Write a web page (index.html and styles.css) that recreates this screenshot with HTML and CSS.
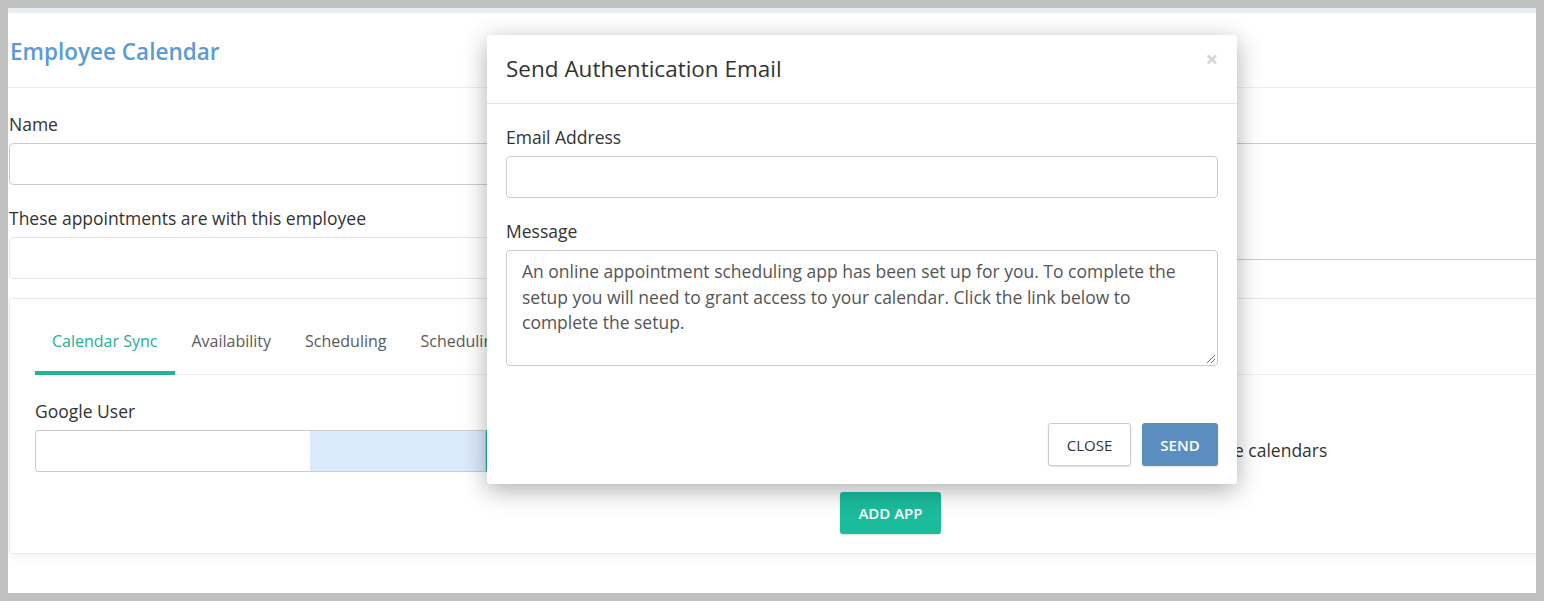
FILE: index.html
```html
<!DOCTYPE html>
<html>
<head>
<meta charset="utf-8">
<link rel="stylesheet" href="styles.css">
</head>
<body>
<div class="frame">
  <div class="topstrip"></div>
  <div class="page-header">
    <h1 class="page-title">Employee Calendar</h1>
  </div>
  <div class="top-grid">
    <div class="left-fields">
      <label class="lbl">Name</label>
      <div class="input"></div>
      <label class="lbl lbl-gap">These appointments are with this employee</label>
      <div class="input input-light"></div>
    </div>
    <div class="right-fields">
      <div class="right-box"></div>
    </div>
  </div>

  <div class="panel">
    <ul class="tabs">
      <li class="tab active">Calendar Sync</li>
      <li class="tab">Availability</li>
      <li class="tab">Scheduling</li>
      <li class="tab">Scheduling Links</li>
      <li class="tab">Notifications</li>
    </ul>
    <div class="tab-body">
      <div class="col-left">
        <label class="lbl">Google User</label>
        <div class="input-group">
          <div class="input g-input"></div>
          <div class="g-btn">Authorize</div>
        </div>
      </div>
      <div class="col-right">
        <div class="check-row"><span class="chk"></span><span class="chk-text">Block off time for events that are in any of the calendars</span></div>
        <button class="btn btn-teal">Add App</button>
      </div>
    </div>
  </div>
</div>

<div class="modal">
  <div class="modal-header">
    <h2 class="modal-title">Send Authentication Email</h2>
    <span class="modal-close">&times;</span>
  </div>
  <div class="modal-body">
    <label class="lbl">Email Address</label>
    <div class="input"></div>
    <label class="lbl lbl-gap">Message</label>
    <div class="textarea">An online appointment scheduling app has been set up for you. To complete the setup you will need to grant access to your calendar. Click the link below to complete the setup.<span class="grip"></span></div>
  </div>
  <div class="modal-footer">
    <button class="btn btn-default">Close</button>
    <button class="btn btn-blue">Send</button>
  </div>
</div>
</body>
</html>
```
FILE: styles.css
```css
* { box-sizing: border-box; }
html, body { margin: 0; padding: 0; }
body {
  background: #c0c0c0;
  font-family: "Open Sans", "Noto Sans", sans-serif;
  color: #333;
  font-size: 16px;
  width: 1544px;
  height: 601px;
  overflow: hidden;
  position: relative;
}
.frame {
  position: relative;
  margin: 8px;
  width: 1528px;
  height: 585px;
  background: #fff;
  overflow: hidden;
  padding-left: 1px;
}
.topstrip {
  height: 5px;
  background: #e8eef3;
  margin-left: -1px;
}
.page-header {
  height: 75px;
  padding-top: 24px;
  border-bottom: 1px solid #eee;
  margin-left: -1px;
}
.page-title {
  margin: 0;
  padding-left: 2px;
  font-size: 22.5px;
  line-height: 30px;
  font-weight: 600;
  color: #5b9bd5;
}
.lbl {
  display: block;
  font-size: 17.5px;
  line-height: 22px;
  margin-bottom: 8px;
  color: #333;
}
.lbl-gap { margin-top: 22px; }
.input {
  height: 42px;
  border: 1px solid #ccc;
  border-radius: 4px;
  background: #fff;
}
.input-light { border-color: #e6e6e6; }
.top-grid {
  display: grid;
  grid-template-columns: 800px 1fr;
  gap: 20px;
  padding-top: 25px;
}
.left-fields .input { margin-right: -2px; }
.right-fields { padding-top: 30px; margin-right: -20px; }
.right-box {
  height: 117px;
  border: 1px solid #ccc;
  border-radius: 4px;
}
.panel {
  margin-top: 19px;
  width: 1560px;
  height: 256px;
  border: 1px solid #e8e8e8;
  border-radius: 3px;
  box-shadow: 0 3px 8px rgba(0, 0, 0, 0.05);
  padding: 18px 25px 0;
}
.tabs {
  display: flex;
  list-style: none;
  margin: 0;
  padding: 0;
  border-bottom: 1px solid #eee;
}
.tab {
  padding: 13px 17px 19px;
  line-height: 22px;
  font-size: 16px;
  color: #5a5a5a;
  border-bottom: 4px solid transparent;
  margin-bottom: -1px;
  white-space: nowrap;
}
.tab.active {
  color: #1fae96;
  border-bottom-color: #1fb398;
  padding-right: 18px;
}
.tab.active + .tab { padding-left: 16px; }
.tab-body {
  display: grid;
  grid-template-columns: 775px 1fr;
  gap: 30px;
  padding-top: 25px;
}
.input-group { display: flex; }
.g-input {
  width: 451px;
  flex: none;
  border-radius: 3px 0 0 3px;
  background: linear-gradient(to right, #fff 0, #fff 274px, #dbeafc 274px);
}
.g-btn {
  flex: 1;
  background: #1abc9c;
  color: #fff;
  height: 42px;
  line-height: 42px;
  padding-left: 16px;
  font-weight: 600;
  font-size: 15px;
}
.col-right { padding-top: 39px; }
.check-row {
  display: flex;
  align-items: center;
  height: 22px;
  gap: 18px;
  line-height: 22px;
  font-size: 17.5px;
  color: #333;
  white-space: nowrap;
}
.chk {
  width: 13px;
  height: 13px;
  border: 1px solid #999;
  border-radius: 2px;
}
.btn {
  font-family: "Open Sans", "Noto Sans", sans-serif;
  text-transform: uppercase;
  font-size: 15px;
  font-weight: 600;
  border-radius: 3px;
  cursor: pointer;
  padding: 0;
}
.btn-teal {
  margin-top: 31px;
  height: 42px;
  width: 101px;
  background: #1abc9c;
  color: #fff;
  border: none;
  box-shadow: 0 1px 2px rgba(0, 0, 0, 0.15);
}
.modal {
  position: absolute;
  left: 487px;
  top: 35px;
  width: 750px;
  height: 449px;
  background: #fff;
  border-radius: 3px;
  box-shadow: 0 6px 24px rgba(0, 0, 0, 0.32);
}
.modal-header {
  display: flex;
  justify-content: space-between;
  align-items: flex-start;
  padding: 18px 19px 19px 19px;
  border-bottom: 1px solid #e5e5e5;
}
.modal-title {
  margin: 0;
  font-size: 22.5px;
  line-height: 31px;
  font-weight: 400;
  color: #333;
}
.modal-close {
  font-size: 22px;
  line-height: 1;
  font-weight: 700;
  color: #d4d4d4;
  margin-top: -6px;
}
.modal-body {
  padding: 22px 19px 57px;
}
.textarea {
  position: relative;
  height: 116px;
  border: 1px solid #ccc;
  border-radius: 4px;
  padding: 8px 16px 8px 15px;
  font-size: 17.5px;
  line-height: 25.5px;
  color: #555;
}
.grip {
  position: absolute;
  right: 2px;
  bottom: 2px;
  width: 8px;
  height: 8px;
  background: linear-gradient(135deg, transparent 45%, #777 45%, #777 55%, transparent 55%, transparent 70%, #777 70%, #777 80%, transparent 80%);
}
.modal-footer {
  display: flex;
  justify-content: flex-end;
  gap: 11px;
  padding: 0 19px 18px;
}
.btn-default {
  height: 43px;
  width: 83px;
  background: #fff;
  color: #333;
  border: 1px solid #ccc;
  font-weight: 400;
  box-shadow: 0 1px 2px rgba(0, 0, 0, 0.12);
}
.btn-blue {
  height: 43px;
  width: 76px;
  background: #5a8ec0;
  color: #fff;
  border: none;
  box-shadow: 0 1px 2px rgba(0, 0, 0, 0.12);
}
```
